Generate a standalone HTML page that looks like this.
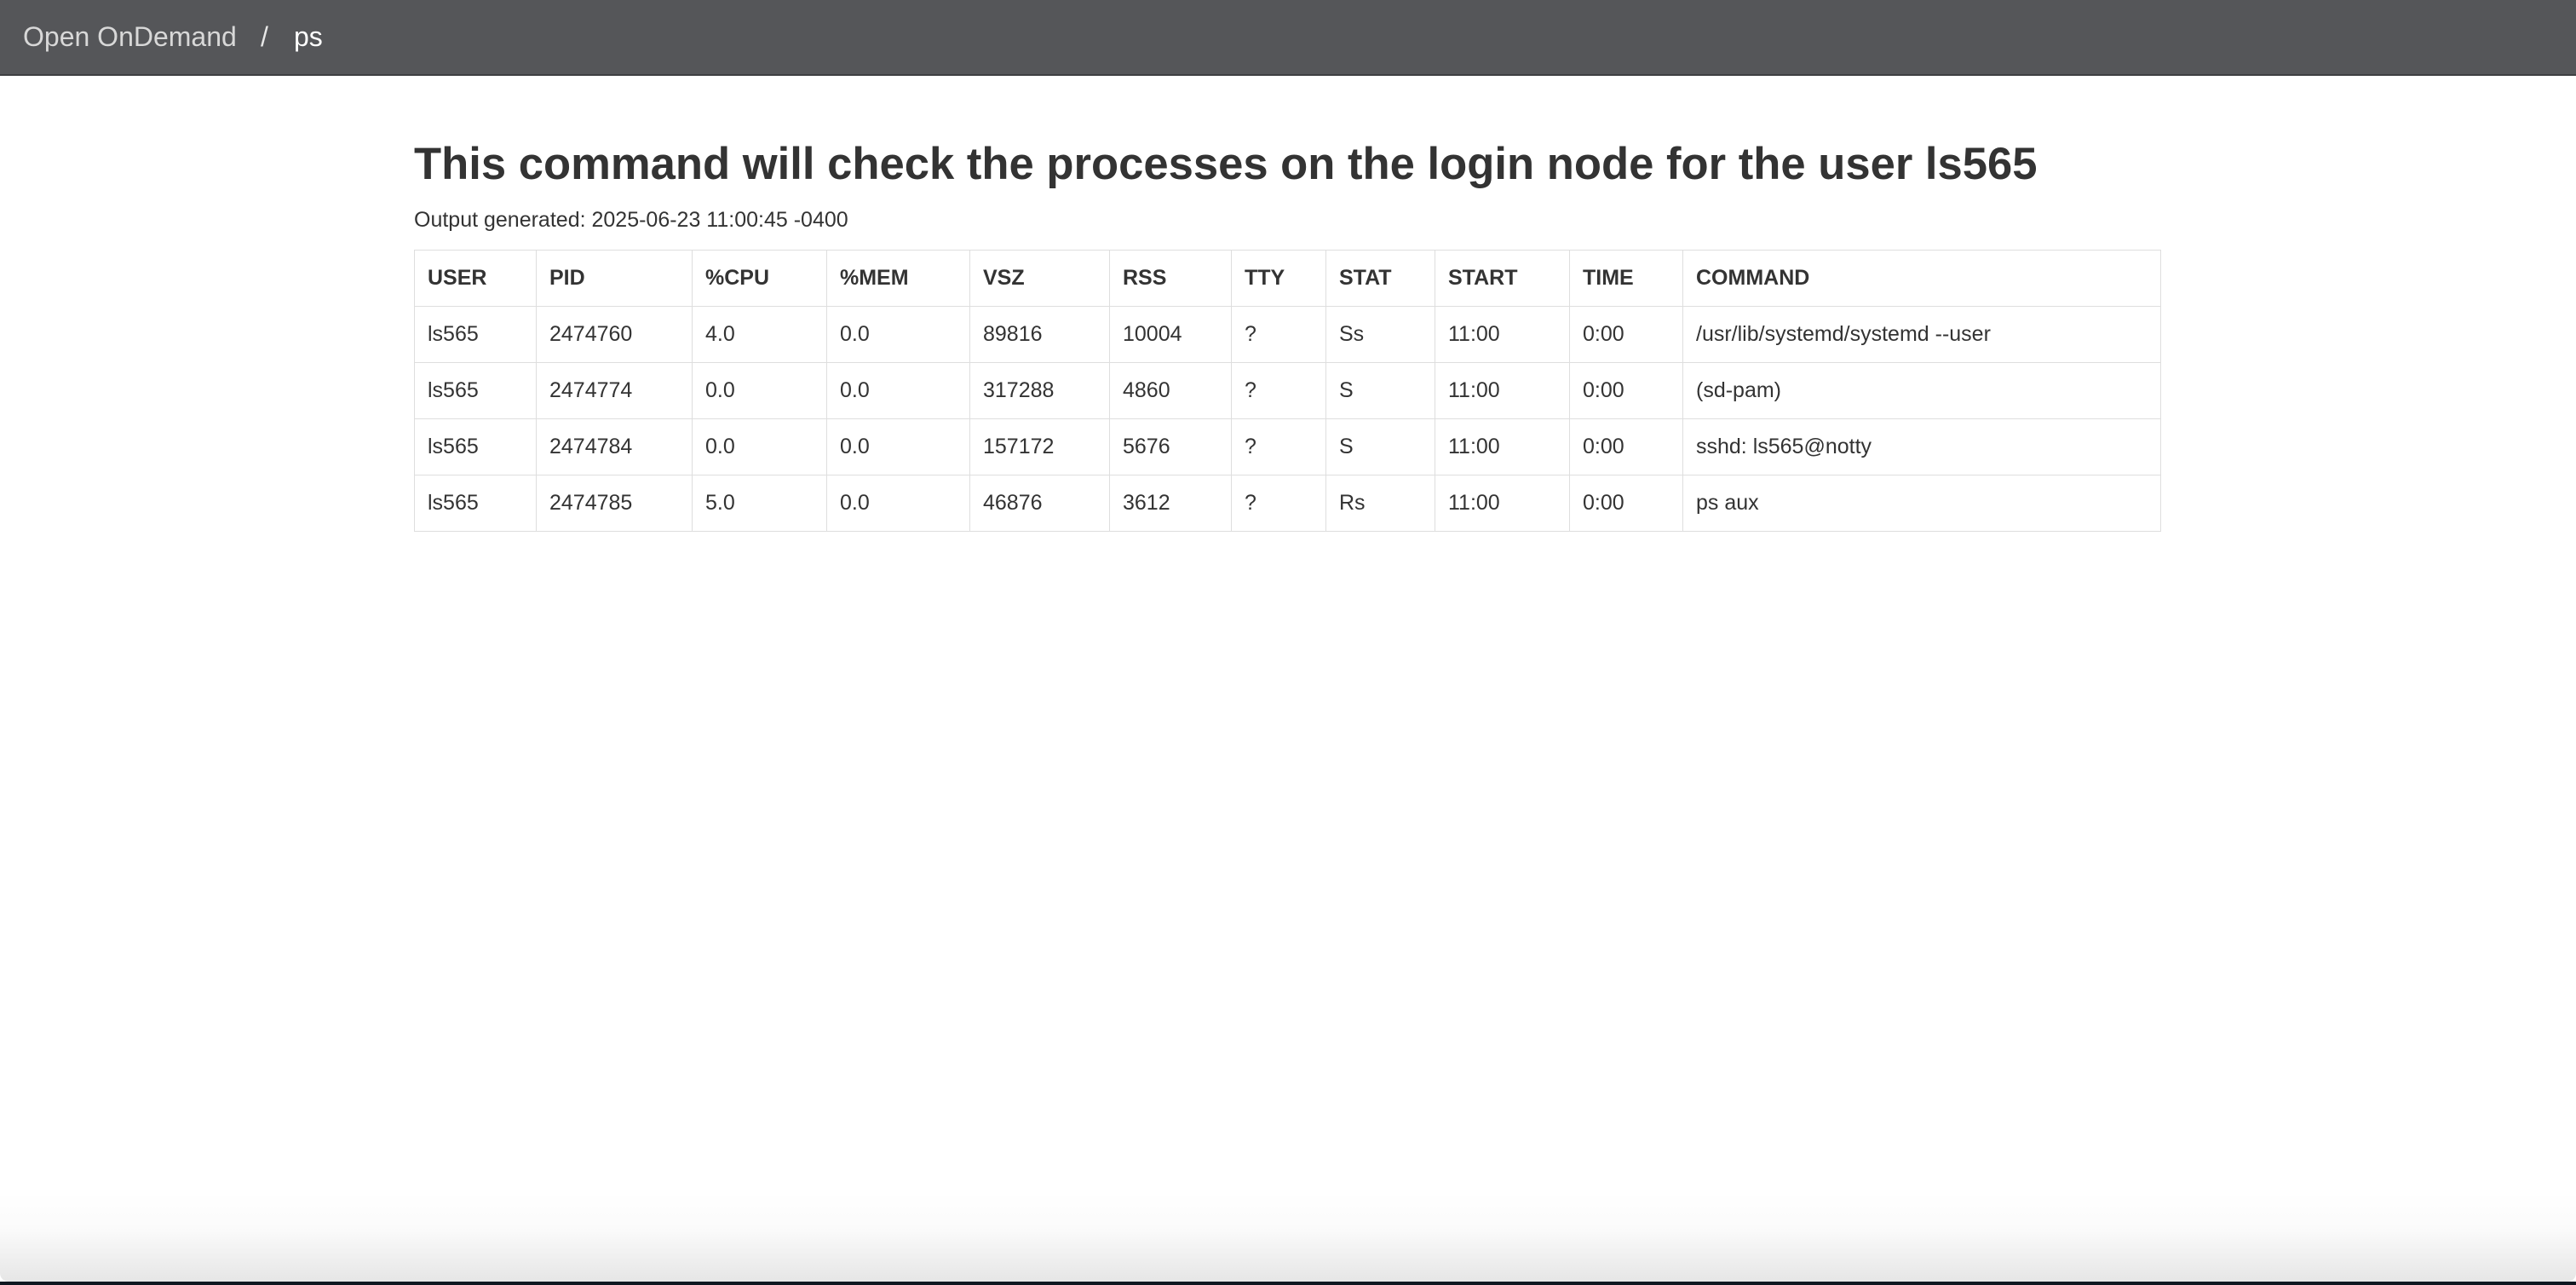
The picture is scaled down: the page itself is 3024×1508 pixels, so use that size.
<!DOCTYPE html>
<html><head><meta charset="utf-8"><style>
html,body{margin:0;padding:0;width:3024px;height:1508px;overflow:hidden;background:#fff;font-family:"Liberation Sans",Arial,sans-serif;color:#333;}
.nav{position:absolute;left:0;top:0;width:3024px;height:87px;background:#555659;border-bottom:2px solid #3e3f42;}
.nav span{position:absolute;top:21px;font-size:32px;line-height:44px;}
.h{position:absolute;left:486px;top:153px;margin:0;font-size:52.6px;font-weight:bold;line-height:80px;white-space:nowrap;}
.out{position:absolute;left:486px;top:240px;font-size:25px;line-height:36px;white-space:nowrap;}
table{position:absolute;left:486px;top:293px;width:2051px;border-collapse:collapse;table-layout:fixed;font-size:25px;}
td,th{border:1.5px solid #dedede;height:65px;padding:0 0 0 15px;text-align:left;vertical-align:middle;white-space:nowrap;}
th{font-weight:bold;}
.bot{position:absolute;left:0;top:1400px;width:3024px;height:104px;background:linear-gradient(#fff,#fbfbfb 40%,#e6e6e6);border-radius:0 0 10px 10px;}
.dark{position:absolute;left:0;top:1504px;width:3024px;height:4px;background:#0f1720;}
</style></head><body>
<div class="nav"><span style="left:27px;color:#d8d8d8">Open OnDemand</span><span style="left:306px;color:#e8e8e8">/</span><span style="left:345px;color:#fff">ps</span></div>
<div class="bot"></div><div class="dark"></div>
<h1 class="h">This command will check the processes on the login node for the user ls565</h1>
<div class="out">Output generated: 2025-06-23 11:00:45 -0400</div>
<table>
<colgroup><col style="width:143px"><col style="width:183px"><col style="width:158px"><col style="width:168px"><col style="width:164px"><col style="width:143px"><col style="width:111px"><col style="width:128px"><col style="width:158px"><col style="width:133px"><col></colgroup>
<tr><th>USER</th><th>PID</th><th>%CPU</th><th>%MEM</th><th>VSZ</th><th>RSS</th><th>TTY</th><th>STAT</th><th>START</th><th>TIME</th><th>COMMAND</th></tr>
<tr><td>ls565</td><td>2474760</td><td>4.0</td><td>0.0</td><td>89816</td><td>10004</td><td>?</td><td>Ss</td><td>11:00</td><td>0:00</td><td>/usr/lib/systemd/systemd --user</td></tr>
<tr><td>ls565</td><td>2474774</td><td>0.0</td><td>0.0</td><td>317288</td><td>4860</td><td>?</td><td>S</td><td>11:00</td><td>0:00</td><td>(sd-pam)</td></tr>
<tr><td>ls565</td><td>2474784</td><td>0.0</td><td>0.0</td><td>157172</td><td>5676</td><td>?</td><td>S</td><td>11:00</td><td>0:00</td><td>sshd: ls565@notty</td></tr>
<tr><td>ls565</td><td>2474785</td><td>5.0</td><td>0.0</td><td>46876</td><td>3612</td><td>?</td><td>Rs</td><td>11:00</td><td>0:00</td><td>ps aux</td></tr>
</table>
</body></html>
